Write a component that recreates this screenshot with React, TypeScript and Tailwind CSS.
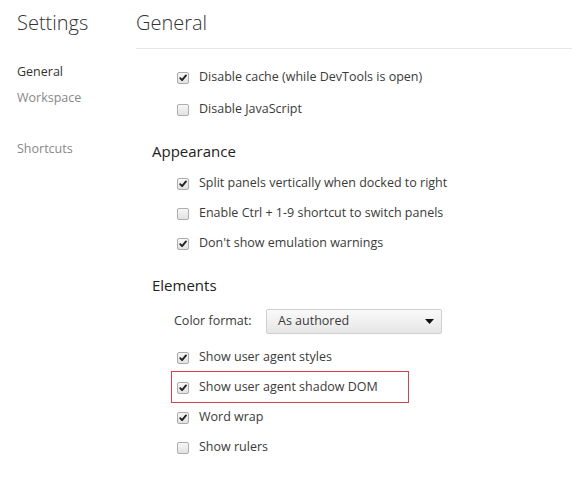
import React from "react";

const FONT = { fontFamily: '"Open Sans", "Noto Sans", sans-serif' };

function Check({ checked }: { checked: boolean }) {
  return (
    <span className="relative ml-[3px] mr-[10px] inline-flex h-[12px] w-[12px] shrink-0 items-center justify-center rounded-[2px] border border-[#acacac] bg-gradient-to-b from-[#f7f7f7] to-[#e2e2e2]">
      {checked && (
        <svg width="10" height="10" viewBox="0 0 10 10" className="absolute left-[0px] top-[0px]">
          <path d="M2.2 5.2 L4.1 7.1 L8 2.4" fill="none" stroke="#222" strokeWidth="1.9" strokeLinecap="round" strokeLinejoin="round" />
        </svg>
      )}
    </span>
  );
}

function Row({ checked, label, h = "h-[30px]" }: { checked: boolean; label: string; h?: string }) {
  return (
    <div className={`flex ${h} items-center pl-[38px] pt-[3px] text-[12.5px] text-[#3a3a3a]`}>
      <Check checked={checked} />
      <span>{label}</span>
    </div>
  );
}

export default function App() {
  return (
    <div className="flex h-[478px] w-[572px] overflow-hidden bg-white" style={FONT}>
      <div className="w-[136px] shrink-0 pl-[17px]">
        <div className="flex h-[48px] items-center pb-[2px] text-[20px] font-light text-[#333]">Settings</div>
        <div className="mt-[11px] flex flex-col text-[12.5px]">
          <div className="flex h-[26px] items-center text-[#333]">General</div>
          <div className="flex h-[26px] items-center text-[#888]">Workspace</div>
          <div className="mt-[25px] flex h-[26px] items-center text-[#888]">Shortcuts</div>
        </div>
      </div>
      <div className="flex-1">
        <div className="flex h-[49px] items-center border-b border-[#e6e6e6] pb-[2px] text-[20px] font-light text-[#333]">
          General
        </div>
        <div className="pt-[11px]">
          <Row checked label="Disable cache (while DevTools is open)" h="h-[32px]" />
          <Row checked={false} label="Disable JavaScript" h="h-[32px]" />
        </div>
        <div className="mt-[15px] flex h-[24px] items-center pl-[16px] text-[15px] text-[#222]">Appearance</div>
        <div className="mt-[4px]">
          <Row checked label="Split panels vertically when docked to right" />
          <Row checked={false} label="Enable Ctrl + 1-9 shortcut to switch panels" />
          <Row checked label="Don't show emulation warnings" />
        </div>
        <div className="mt-[16px] flex h-[24px] items-center pl-[16px] text-[15px] text-[#222]">Elements</div>
        <div className="mt-[8px] flex h-[30px] items-center pl-[38px] pt-[3px] text-[12.5px] text-[#3a3a3a]">
          <span className="w-[92px] shrink-0">Color format:</span>
          <div className="flex h-[25px] w-[176px] items-center justify-between rounded-[2px] border border-[#cfcfcf] bg-gradient-to-b from-[#fafafa] to-[#e6e6e6] pl-[11px] pr-[7px]">
            <span>As authored</span>
            <svg width="9" height="5" viewBox="0 0 9 5">
              <path d="M0 0 L9 0 L4.5 5 Z" fill="#111" />
            </svg>
          </div>
        </div>
        <div className="mt-[6px]">
          <Row checked label="Show user agent styles" />
          <div className="relative">
            <Row checked label="Show user agent shadow DOM" />
            <div className="absolute left-[35px] top-[0px] h-[32px] w-[238px] border border-[#d6414d]" />
          </div>
          <Row checked label="Word wrap" />
          <Row checked={false} label="Show rulers" />
        </div>
      </div>
    </div>
  );
}
